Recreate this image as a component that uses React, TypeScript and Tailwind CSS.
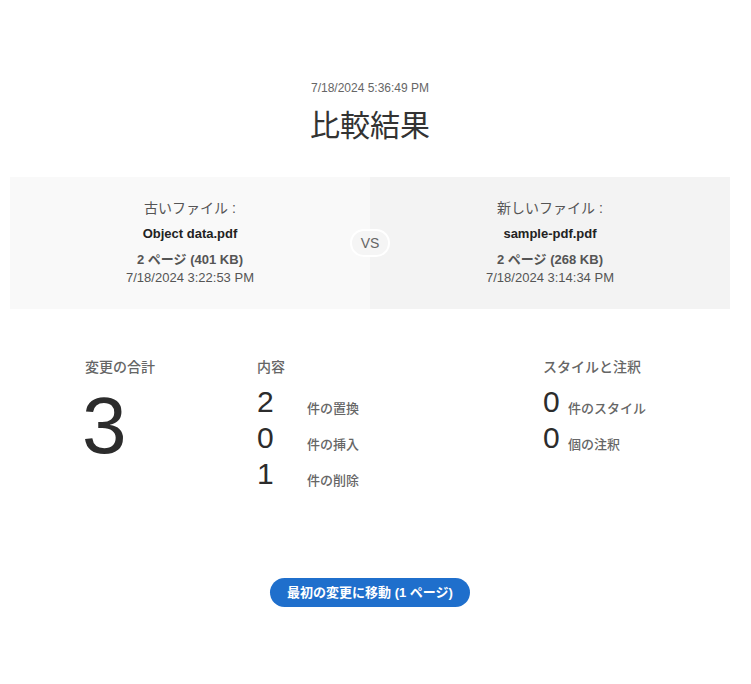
import React from 'react';

const FileCard = ({ label, name, size, date, bg }: { label: string; name: string; size: string; date: string; bg: string }) => (
  <div className={`flex flex-1 flex-col items-center pt-[22px] pb-[24px] ${bg}`}>
    <div className="text-[14px] leading-[18px] text-[#555]">{label}</div>
    <div className="mt-[8px] text-[13px] leading-[18px] font-bold text-[#222]">{name}</div>
    <div className="mt-[8px] text-[13px] leading-[17px] font-bold text-[#555]">{size}</div>
    <div className="mt-[1px] text-[13px] leading-[18px] text-[#555]">{date}</div>
  </div>
);

const Row = ({ n, t, w }: { n: string; t: string; w: string }) => (
  <div className="flex items-end h-[36px]">
    <span className={`${w} text-[30px] leading-[32px] text-[#2c2c2c]`}>{n}</span>
    <span className="text-[13px] font-medium text-[#666]">{t}</span>
  </div>
);

export default function App() {
  return (
    <div
      className="w-[751px] h-[684px] bg-white text-[#333]"
      style={{ fontFamily: '"Liberation Sans", "Noto Sans CJK JP", sans-serif' }}
    >
      <div className="w-[740px]">
        <div className="pt-[81px] flex flex-col items-center">
          <div className="text-[12px] leading-[14px] text-[#666]">7/18/2024 5:36:49 PM</div>
          <h1 className="mt-[13px] text-[30px] leading-[36px] text-[#333]">比較結果</h1>
        </div>

        <div className="relative mx-[10px] mt-[33px] flex h-[132px]">
          <FileCard label="古いファイル :" name="Object data.pdf" size="2 ページ (401 KB)" date="7/18/2024 3:22:53 PM" bg="bg-[#f9f9f9]" />
          <FileCard label="新しいファイル :" name="sample-pdf.pdf" size="2 ページ (268 KB)" date="7/18/2024 3:14:34 PM" bg="bg-[#f3f3f3]" />
          <div className="absolute left-[340px] top-[52px] flex h-[28px] w-[40px] items-center justify-center rounded-full border-2 border-white bg-[#f5f5f5] text-[14px] text-[#666]">
            VS
          </div>
        </div>

        <div className="mt-[49px] flex pl-[85px]">
          <div className="w-[172px]">
            <div className="text-[14px] leading-[18px] font-medium text-[#666]">変更の合計</div>
            <div className="mt-[10px] -ml-[3px] text-[80px] leading-[80px] text-[#2c2c2c]">3</div>
          </div>
          <div className="w-[286px]">
            <div className="text-[14px] leading-[18px] font-medium text-[#666]">内容</div>
            <div className="mt-[6px] flex flex-col">
              <Row n="2" t="件の置換" w="w-[50px]" />
              <Row n="0" t="件の挿入" w="w-[50px]" />
              <Row n="1" t="件の削除" w="w-[50px]" />
            </div>
          </div>
          <div>
            <div className="text-[14px] leading-[18px] font-medium text-[#666]">スタイルと注釈</div>
            <div className="mt-[6px] flex flex-col">
              <Row n="0" t="件のスタイル" w="w-[25px]" />
              <Row n="0" t="個の注釈" w="w-[25px]" />
            </div>
          </div>
        </div>

        <div className="mt-[88px] flex justify-center">
          <button className="h-[29px] rounded-full bg-[#1f6fcc] px-[17px] text-[13px] font-bold text-white">
            最初の変更に移動 (1 ページ)
          </button>
        </div>
      </div>
    </div>
  );
}
